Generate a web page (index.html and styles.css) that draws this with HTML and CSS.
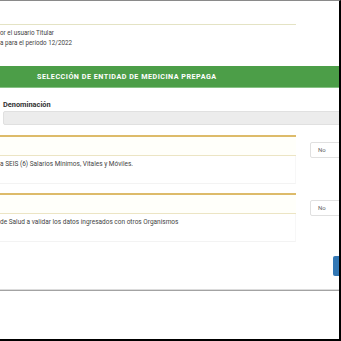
FILE: index.html
```html
<!DOCTYPE html>
<html lang="es">
<head>
<meta charset="utf-8">
<link rel="stylesheet" href="styles.css">
</head>
<body>
<div class="frame">
  <div class="page">
    <div class="intro">
      <div class="rule-khaki"></div>
      <p class="line">or el usuario Titular</p>
      <p class="line">a para el período 12/2022</p>
    </div>
    <div class="banner">SELECCIÓN DE ENTIDAD DE MEDICINA PREPAGA</div>
    <div class="field">
      <label class="label">Denominación</label>
      <div class="input"></div>
    </div>
    <div class="row">
      <div class="panel">
        <div class="panel-head"></div>
        <div class="panel-body">a SEIS (6) Salarios Mínimos, Vitales y Móviles.</div>
      </div>
      <div class="select">No</div>
    </div>
    <div class="row">
      <div class="panel">
        <div class="panel-head"></div>
        <div class="panel-body">de Salud a validar los datos ingresados con otros Organismos</div>
      </div>
      <div class="select">No</div>
    </div>
    <div class="actions">
      <div class="btn"></div>
    </div>
    <div class="rule-grey"></div>
  </div>
</div>
</body>
</html>
```
FILE: styles.css
```css
html, body {
  margin: 0;
  padding: 0;
  background: #fff;
}
.frame {
  width: 341px;
  height: 341px;
  box-sizing: border-box;
  border-top: 1px solid #8a8a8a;
  border-right: 2px solid #000;
  border-bottom: 2px solid #000;
  overflow: hidden;
}
.page {
  font-family: Roboto, "Liberation Sans", sans-serif;
  color: #444;
  font-size: 6px;
}
.intro {
  padding-top: 23px;
  height: 42px;
  box-sizing: border-box;
}
.rule-khaki {
  width: 296px;
  height: 1px;
  background: #e4e3c4;
  margin-bottom: 3px;
}
.line {
  margin: 0;
  line-height: 10px;
  font-size: 6.3px;
}
.banner {
  margin-top: 23px;
  height: 22px;
  background: #4c9e48;
  border-bottom: 1px solid #86c284;
  box-sizing: border-box;
  color: #fff;
  font-weight: 700;
  font-size: 7.2px;
  letter-spacing: 0.5px;
  line-height: 21px;
  padding-left: 37px;
}
.field {
  padding: 12px 0 0 3px;
}
.label {
  display: block;
  font-weight: 700;
  font-size: 7.4px;
  color: #333;
  line-height: 10px;
}
.input {
  margin-top: 1px;
  height: 12px;
  background: #ececec;
  border: 1px solid #e0e0e0;
  border-radius: 2px;
  width: 345px;
}
.row {
  display: flex;
  gap: 14px;
  margin-top: 10px;
}
.panel {
  width: 296px;
  flex: none;
  border-top: 2px solid #ddbb6a;
  box-sizing: border-box;
  height: 48px;
}
.panel-head {
  height: 18px;
  border-bottom: 1px solid #ece5c4;
  background: #fffffa;
}
.panel-body {
  height: 28px;
  box-sizing: border-box;
  padding-top: 3px;
  line-height: 10px;
  font-size: 6.5px;
  color: #444;
  border-right: 1px solid #f7f7f7;
  border-bottom: 1px solid #f3f3f3;
}
.select {
  margin-top: 7px;
  height: 16px;
  width: 40px;
  flex: none;
  box-sizing: border-box;
  border: 1px solid #e0e0e0;
  border-radius: 2px;
  padding-left: 7px;
  line-height: 14px;
  font-size: 6px;
  color: #666;
}
.actions {
  display: flex;
  justify-content: flex-end;
  padding-top: 15px;
}
.btn {
  width: 8px;
  height: 20px;
  background: #3378b5;
  border-radius: 2px 0 0 2px;
  margin-right: -2px;
}
.rule-grey {
  margin-top: 13px;
  height: 1px;
  background: #a3a3a3;
  border-top: 1px solid #dcdcdc;
}
```
